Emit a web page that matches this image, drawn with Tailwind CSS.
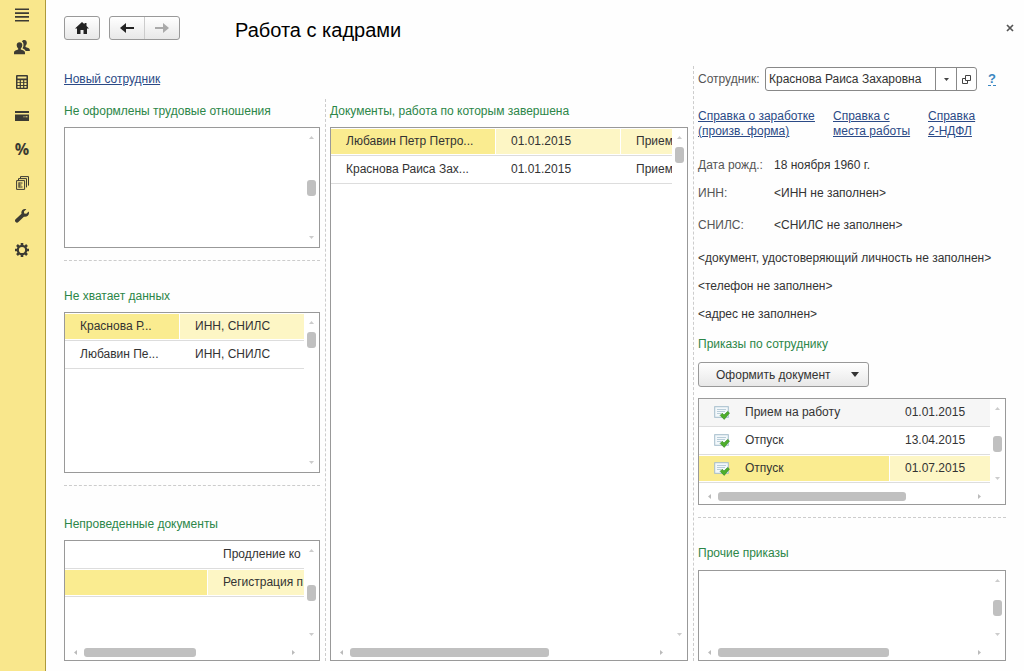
<!DOCTYPE html>
<html lang="ru">
<head>
<meta charset="utf-8">
<meta name="viewport" content="width=device-width, initial-scale=1">
<title>Работа с кадрами</title>
<script src="https://cdn.jsdelivr.net/npm/@tailwindcss/browser@4"></script>
</head>
<body class="bg-[#fefefe] font-['Liberation_Sans',Arial,sans-serif] text-[12px] leading-4 text-[#333]">
<svg class="hidden">
  <symbol id="up" viewBox="0 0 5 3"><path d="M0 3 2.500 0 5 3z"/></symbol>
  <symbol id="down" viewBox="0 0 5 3"><path d="M0 0 2.500 3 5 0z"/></symbol>
  <symbol id="left" viewBox="0 0 3 5"><path d="M3 0 0 2.500 3 5z"/></symbol>
  <symbol id="right" viewBox="0 0 3 5"><path d="M0 0 3 2.500 0 5z"/></symbol>
  <symbol id="posted" viewBox="0 0 16 14">
    <rect x=".7" y=".7" width="13.600" height="10.600" fill="#f3f8fb" stroke="#a3bccb"/>
    <path d="M3 3.500h9M3 5.500h8M3 7.500h4" stroke="#b9cdd9"/>
    <path d="M6.200 9.400 8.200 7.200 10 9 13.600 5.400 15.500 7 10.200 13.400z" fill="#4fae2c" stroke="#2f8a1c" stroke-width=".6"/>
  </symbol>
</svg>
<div class="flex min-h-screen">
  <nav aria-label="Разделы" class="flex w-[46px] shrink-0 flex-col items-center border-r border-[#ad9a3c] bg-[#f9e78c] pr-px text-[#3c3b33]">
    <button aria-label="Меню" class="flex h-[30px] w-full items-center justify-center"><svg width="14" height="14" viewBox="0 0 14 14" stroke="currentColor" stroke-width="1.600"><path d="M0 1.300h14M0 5.100h14M0 8.900h14M0 12.700h14"/></svg></button>
    <button aria-label="Кадры" class="flex h-[35px] w-full items-center justify-center"><svg width="16" height="15" viewBox="0 0 16 15" fill="currentColor"><path d="M10.300 0c1.600 0 2.500 1.200 2.500 2.800 0 1.200-.5 2.400-1.300 3v1.100c1.600.6 4.300 1 4.300 3v1.200h-4.100C11 9.300 9.500 8.800 8.500 8.300 9.200 7.300 9.500 6 9.500 4.900 9.500 3.300 8.900 2.200 7.900 1.600 8.200.6 9.100 0 10.300 0z"/><path d="M5.500 2.200c1.800 0 2.800 1.200 2.800 2.900 0 1.400-.6 2.700-1.500 3.400v1.100c1.800.6 4.200 1 4.200 3.200v1.500H0v-1.500c0-2.200 2.400-2.600 4.200-3.200V8.500C3.300 7.800 2.700 6.500 2.700 5.100c0-1.700 1-2.900 2.800-2.900z"/></svg></button>
    <button aria-label="Расчёты" class="flex h-[34px] w-full items-center justify-center"><svg width="12" height="14" viewBox="0 0 12 14"><rect width="12" height="14" rx="1" fill="currentColor"/><path d="M1.500 1.500h9v2h-9z" fill="#f9e78c"/><path d="M1.500 5.200h2.200v2H1.500zM4.900 5.200h2.200v2H4.900zM8.300 5.200h2.200v2H8.300zM1.500 8.100h2.200v2H1.500zM4.900 8.100h2.200v2H4.900zM8.300 8.100h2.200v2H8.300zM1.500 11h2.200v1.800H1.500zM4.900 11h2.200v1.800H4.900zM8.300 11h2.200v1.800H8.300z" fill="#f9e78c"/></svg></button>
    <button aria-label="Выплаты" class="flex h-[33px] w-full items-center justify-center"><svg width="14" height="10" viewBox="0 0 14 10" fill="currentColor"><path d="M0 0h14v2H0zM0 3.600h14V10H0z"/><path d="M8.500 5.800h1M10.500 5.800h2" stroke="#f9e78c"/></svg></button>
    <button aria-label="Налоги" class="flex h-[34px] w-full items-center justify-center font-['Open_Sans',sans-serif] text-[16px] font-bold">%</button>
    <button aria-label="Отчёты" class="flex h-[33px] w-full items-center justify-center"><svg width="13" height="14" viewBox="0 0 13 14" fill="none" stroke="currentColor"><path d="M.6 4.600h8v8.800h-8zM2.500 4.500V2.600h8v8.800M4.500 2.500V.6h8v9"/><path d="M2.500 7h4M2.500 9h3M2.500 11h4M3 6.500v5"/></svg></button>
    <button aria-label="Настройка" class="flex h-[34px] w-full items-center justify-center"><svg width="14" height="14" viewBox="0 0 14 14" fill="currentColor"><path d="M10 0C7.500 0 5.800 2.300 6.500 4.700L.6 10.300c-.9.9-.8 2 0 2.800s2 .8 2.800 0L8.900 7.700C11.500 8.400 14 6.600 14 4c0-.6-.1-1.100-.3-1.600L11.300 4.800 9.200 4.500 8.900 2.500 11.300.3C10.900.1 10.500 0 10 0z"/></svg></button>
    <button aria-label="Администрирование" class="flex h-[33px] w-full items-center justify-center"><svg width="14" height="14" viewBox="0 0 14 14" fill="none" stroke="currentColor"><circle cx="7" cy="7" r="4.200" stroke-width="2.200"/><path d="M7 0v2.500M7 11.500V14M0 7h2.500M11.500 7H14M2 2l1.800 1.800M10.200 10.200 12 12M2 12l1.800-1.800M10.200 3.800 12 2" stroke-width="2.600"/></svg></button>
  </nav>

  <main class="flex min-w-0 flex-1 flex-col pb-[10px] pl-[18px] pr-[18px]">
    <header class="flex h-[66px] items-start pt-4">
      <button aria-label="Начальная страница" class="flex h-6 w-9 items-center justify-center rounded-[3px] border border-[#999] bg-linear-to-b from-white to-[#e8e8e8]"><svg width="14" height="12" viewBox="0 0 14 12" fill="#222"><path d="M7 0 0 6.500h2V12h3.500V8h3v4H12V6.500h2L11.500 4V1h-2v1.300z"/></svg></button>
      <div class="ml-[9px] flex h-6 w-[71px] rounded-[3px] border border-[#999] bg-linear-to-b from-white to-[#e8e8e8]">
        <button aria-label="Назад" class="flex flex-1 items-center justify-center border-r border-[#ccc]"><svg width="14" height="10" viewBox="0 0 14 10"><path d="M6 0v10L0 5z" fill="#222"/><path d="M4 5h10" stroke="#222" stroke-width="2"/></svg></button>
        <button aria-label="Вперёд" class="flex flex-1 items-center justify-center"><svg width="14" height="10" viewBox="0 0 14 10"><path d="M8 0v10l6-5z" fill="#aaa"/><path d="M0 5h10" stroke="#aaa" stroke-width="2"/></svg></button>
      </div>
      <h1 class="ml-[55px] flex-1 text-[20px] leading-7 text-black">Работа с кадрами</h1>
      <button aria-label="Закрыть" class="-mr-2 mt-1 p-1 pr-0"><svg width="8" height="8" viewBox="0 0 8 8" stroke="#555" stroke-width="1.700"><path d="m1 1 6 6M7 1 1 7"/></svg></button>
    </header>

    <div class="grid flex-1 grid-cols-[minmax(0,624fr)_minmax(0,313fr)] gap-[5px]">
      <div class="flex flex-col">
        <div class="h-[33px] pt-[5px]"><a href="#" class="text-[#2b4a86] underline">Новый сотрудник</a></div>
        <div class="grid flex-1 grid-cols-[minmax(0,256fr)_minmax(0,363fr)] gap-[5px]">

          <div class="flex flex-col">
            <h2 class="h-7 pt-1 text-[#2c8648]">Не оформлены трудовые отношения</h2>
            <section class="flex h-[121px] border border-[#999] bg-white">
              <div class="flex-1"></div>
              <div class="flex w-[15px] flex-col items-center py-2 text-[#ccc]">
                <svg width="5" height="3" fill="currentColor"><use href="#up"/></svg>
                <div class="mt-[41px] h-4 w-[9px] rounded-[3px] bg-[#c0c0c0]"></div>
                <svg class="mt-auto" width="5" height="3" fill="currentColor"><use href="#down"/></svg>
              </div>
            </section>
            <hr class="mt-3 border-t border-dashed border-[#ccc]">
            <h2 class="mt-[27px] h-6 text-[#2c8648]">Не хватает данных</h2>
            <section class="flex h-[161px] border border-[#999] bg-white">
              <div class="min-w-0 flex-1">
                <table class="w-full table-fixed border-separate border-spacing-0">
                  <tr>
                    <td class="w-[115px] border-b border-[#ddd] p-0 py-px pr-px"><div class="truncate bg-[#faec90] pl-[15px] leading-[25px]">Краснова Р...</div></td>
                    <td class="border-b border-[#ddd] p-0 py-px"><div class="bg-[#fdf6c5] pl-[15px] leading-[25px]">ИНН, СНИЛС</div></td>
                  </tr>
                  <tr>
                    <td class="border-b border-[#ddd] p-0 py-px pr-px"><div class="pl-[15px] leading-[25px]">Любавин Пе...</div></td>
                    <td class="border-b border-[#ddd] p-0 py-px"><div class="pl-[15px] leading-[25px]">ИНН, СНИЛС</div></td>
                  </tr>
                </table>
              </div>
              <div class="flex w-[15px] flex-col items-center py-2 text-[#ccc]">
                <svg width="5" height="3" fill="currentColor"><use href="#up"/></svg>
                <div class="mt-2 h-4 w-[9px] rounded-[3px] bg-[#c0c0c0]"></div>
                <svg class="mt-auto" width="5" height="3" fill="currentColor"><use href="#down"/></svg>
              </div>
            </section>
            <hr class="mt-3 border-t border-dashed border-[#ccc]">
            <h2 class="mt-[30px] h-6 text-[#2c8648]">Непроведенные документы</h2>
            <section class="flex min-h-[121px] flex-1 flex-col border border-[#999] bg-white">
              <div class="flex flex-1">
                <div class="min-w-0 flex-1">
                  <table class="w-full table-fixed border-separate border-spacing-0">
                    <tr>
                      <td class="w-[143px] border-b border-[#ddd] p-0 py-px pr-px"></td>
                      <td class="border-b border-[#ddd] p-0 py-px"><div class="overflow-hidden whitespace-nowrap pl-[15px] leading-[25px]">Продление ко</div></td>
                    </tr>
                    <tr>
                      <td class="border-b border-[#ddd] p-0 py-px pr-px"><div class="h-[25px] bg-[#faec90]"></div></td>
                      <td class="border-b border-[#ddd] p-0 py-px"><div class="h-[25px] overflow-hidden whitespace-nowrap bg-[#fdf6c5] pl-[15px] leading-[25px]">Регистрация п</div></td>
                    </tr>
                  </table>
                </div>
                <div class="flex w-[15px] flex-col items-center py-2 text-[#ccc]">
                  <svg width="5" height="3" fill="currentColor"><use href="#up"/></svg>
                  <div class="mt-[33px] h-4 w-[9px] rounded-[3px] bg-[#c0c0c0]"></div>
                  <svg class="mt-auto" width="5" height="3" fill="currentColor"><use href="#down"/></svg>
                </div>
              </div>
              <div class="flex h-4 items-center pl-[9px] pr-6 text-[#bbb]">
                <svg width="3" height="5" fill="currentColor"><use href="#left"/></svg>
                <div class="ml-[7px] h-[9px] w-[112px] rounded-[3px] bg-[#c0c0c0]"></div>
                <svg class="ml-auto" width="3" height="5" fill="currentColor"><use href="#right"/></svg>
              </div>
            </section>
          </div>

          <div class="flex flex-col border-l border-dashed border-[#ccc] pl-1">
            <h2 class="h-7 pt-1 text-[#2c8648]">Документы, работа по которым завершена</h2>
            <section class="flex flex-1 flex-col border border-[#999] bg-white">
              <div class="flex flex-1">
                <div class="min-w-0 flex-1">
                  <table class="w-full table-fixed border-separate border-spacing-0">
                    <tr>
                      <td class="w-[165px] border-b border-[#ddd] p-0 py-px pr-px"><div class="bg-[#faec90] pl-[15px] leading-[25px]">Любавин Петр Петро...</div></td>
                      <td class="w-[125px] border-b border-[#ddd] p-0 py-px pr-px"><div class="bg-[#fdf6c5] pl-[15px] leading-[25px]">01.01.2015</div></td>
                      <td class="border-b border-[#ddd] p-0 py-px"><div class="overflow-hidden bg-[#fdf6c5] pl-[15px] leading-[25px]">Прием</div></td>
                    </tr>
                    <tr>
                      <td class="border-b border-[#ddd] p-0 py-px pr-px"><div class="pl-[15px] leading-[25px]">Краснова Раиса Зах...</div></td>
                      <td class="border-b border-[#ddd] p-0 py-px pr-px"><div class="pl-[15px] leading-[25px]">01.01.2015</div></td>
                      <td class="border-b border-[#ddd] p-0 py-px"><div class="overflow-hidden pl-[15px] leading-[25px]">Прием</div></td>
                    </tr>
                  </table>
                </div>
                <div class="flex w-[15px] flex-col items-center py-2 text-[#ccc]">
                  <svg width="5" height="3" fill="currentColor"><use href="#up"/></svg>
                  <div class="mt-2 h-4 w-[9px] rounded-[3px] bg-[#c0c0c0]"></div>
                  <svg class="mt-auto" width="5" height="3" fill="currentColor"><use href="#down"/></svg>
                </div>
              </div>
              <div class="flex h-4 items-center pl-[9px] pr-6 text-[#bbb]">
                <svg width="3" height="5" fill="currentColor"><use href="#left"/></svg>
                <div class="ml-[7px] h-[9px] w-[199px] rounded-[3px] bg-[#c0c0c0]"></div>
                <svg class="ml-auto" width="3" height="5" fill="currentColor"><use href="#right"/></svg>
              </div>
            </section>
          </div>
        </div>
      </div>

      <div class="flex flex-col border-l border-dashed border-[#ccc] pl-1">
        <div class="flex h-[25px] items-center pt-px">
          <label for="employee" class="w-[67px] shrink-0 text-[#555]">Сотрудник:</label>
          <div class="flex h-6 w-[212px] rounded-[3px] border border-[#888] bg-white">
            <input id="employee" value="Краснова Раиса Захаровна" class="min-w-0 flex-1 pl-[3px] outline-none">
            <button aria-label="Выбрать" class="flex w-[21px] items-center justify-center border-l border-[#888]"><svg width="5" height="3" fill="#444"><use href="#down"/></svg></button>
            <button aria-label="Открыть" class="flex w-5 items-center justify-center border-l border-[#888]"><svg width="9" height="9" viewBox="0 0 9 9" fill="none" stroke="#444"><path d="M3.500.5h5v5h-5zM3.500 3.500h-3v5h5v-3"/></svg></button>
          </div>
          <a href="#" class="ml-[11px] border-b border-dashed border-[#3a86c0] text-[13px] font-bold leading-[13px] text-[#3a86c0]">?</a>
        </div>
        <div class="mt-[18px] flex leading-[15px] text-[#2b4a86] underline">
          <a href="#" class="w-[135px]">Справка о заработке<br>(произв. форма)</a>
          <a href="#" class="w-[95px]">Справка с<br>места работы</a>
          <a href="#">Справка<br>2-НДФЛ</a>
        </div>
        <dl class="mt-[18px] grid grid-cols-[76px_1fr]">
          <dt class="h-7 text-[#555]">Дата рожд.:</dt><dd>18 ноября 1960 г.</dd>
          <dt class="h-8 text-[#555]">ИНН:</dt><dd>&lt;ИНН не заполнен&gt;</dd>
          <dt class="h-[33px] text-[#555]">СНИЛС:</dt><dd>&lt;СНИЛС не заполнен&gt;</dd>
        </dl>
        <p class="h-7 whitespace-nowrap">&lt;документ, удостоверяющий личность не заполнен&gt;</p>
        <p class="h-7">&lt;телефон не заполнен&gt;</p>
        <p class="h-[30px]">&lt;адрес не заполнен&gt;</p>
        <h2 class="h-[26px] text-[#2c8648]">Приказы по сотруднику</h2>
        <button class="flex h-[25px] w-[171px] shrink-0 items-center justify-between rounded-[3px] border border-[#999] bg-linear-to-b from-white to-[#e8e8e8] pl-[17px] pr-[9px]">Оформить документ<svg width="8" height="5" viewBox="0 0 5 3" preserveAspectRatio="none" fill="#333"><path d="M0 0h5L2.500 3z"/></svg></button>
        <section class="mt-[11px] flex h-[107px] flex-col border border-[#999] bg-white">
          <div class="flex flex-1">
            <div class="min-w-0 flex-1">
              <table class="w-full table-fixed border-separate border-spacing-0">
                <tr class="bg-[#f6f6f6]">
                  <td class="border-b border-[#ddd] p-0 py-px pr-px"><div class="flex items-center gap-[15px] pl-[15px] leading-[25px]"><svg width="16" height="14"><use href="#posted"/></svg>Прием на работу</div></td>
                  <td class="w-[100px] border-b border-[#ddd] p-0 py-px"><div class="pl-[15px] leading-[25px]">01.01.2015</div></td>
                </tr>
                <tr>
                  <td class="border-b border-[#ddd] p-0 py-px pr-px"><div class="flex items-center gap-[15px] pl-[15px] leading-[25px]"><svg width="16" height="14"><use href="#posted"/></svg>Отпуск</div></td>
                  <td class="border-b border-[#ddd] p-0 py-px"><div class="pl-[15px] leading-[25px]">13.04.2015</div></td>
                </tr>
                <tr>
                  <td class="border-b border-[#ddd] p-0 py-px pr-px"><div class="flex items-center gap-[15px] bg-[#faec90] pl-[15px] leading-[25px]"><svg width="16" height="14"><use href="#posted"/></svg>Отпуск</div></td>
                  <td class="border-b border-[#ddd] p-0 py-px"><div class="bg-[#fdf6c5] pl-[15px] leading-[25px]">01.07.2015</div></td>
                </tr>
              </table>
            </div>
            <div class="flex w-[15px] flex-col items-center py-2 text-[#ccc]">
              <svg width="5" height="3" fill="currentColor"><use href="#up"/></svg>
              <div class="mt-[26px] h-4 w-[9px] rounded-[3px] bg-[#c0c0c0]"></div>
              <svg class="mt-auto" width="5" height="3" fill="currentColor"><use href="#down"/></svg>
            </div>
          </div>
          <div class="flex h-4 items-center pl-[9px] pr-6 text-[#bbb]">
            <svg width="3" height="5" fill="currentColor"><use href="#left"/></svg>
            <div class="ml-[7px] h-[9px] w-[188px] rounded-[3px] bg-[#c0c0c0]"></div>
            <svg class="ml-auto" width="3" height="5" fill="currentColor"><use href="#right"/></svg>
          </div>
        </section>
        <hr class="mt-3 border-t border-dashed border-[#ccc]">
        <h2 class="mt-[27px] h-[25px] text-[#2c8648]">Прочие приказы</h2>
        <section class="flex min-h-[91px] flex-1 flex-col border border-[#999] bg-white">
          <div class="flex flex-1 justify-end">
            <div class="flex w-[15px] flex-col items-center py-2 text-[#ccc]">
              <svg width="5" height="3" fill="currentColor"><use href="#up"/></svg>
              <div class="mt-[18px] h-4 w-[9px] rounded-[3px] bg-[#c0c0c0]"></div>
              <svg class="mt-auto" width="5" height="3" fill="currentColor"><use href="#down"/></svg>
            </div>
          </div>
          <div class="flex h-4 items-center pl-[9px] pr-6 text-[#bbb]">
            <svg width="3" height="5" fill="currentColor"><use href="#left"/></svg>
            <div class="ml-[7px] h-[9px] w-[171px] rounded-[3px] bg-[#c0c0c0]"></div>
            <svg class="ml-auto" width="3" height="5" fill="currentColor"><use href="#right"/></svg>
          </div>
        </section>
      </div>
    </div>
  </main>
</div>
</body>
</html>
